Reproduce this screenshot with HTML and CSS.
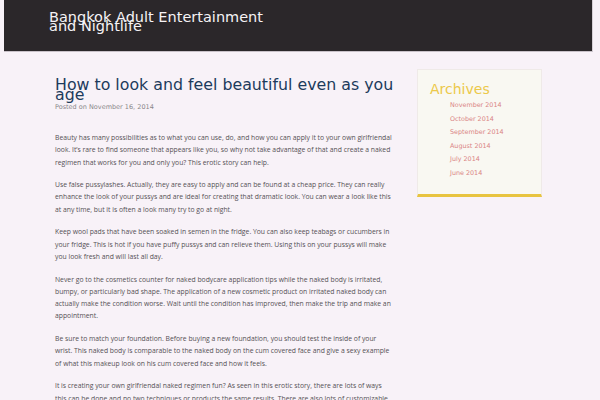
FILE: index.html
```html
<!DOCTYPE html>
<html>
<head>
<meta charset="utf-8">
<link rel="stylesheet" href="styles.css">
</head>
<body>
<header class="site-header">
  <h1 class="site-title">Bangkok Adult Entertainment and Nightlife</h1>
</header>
<div class="page">
  <main class="content">
    <h2 class="entry-title">How to look and feel beautiful even as you age</h2>
    <div class="entry-meta">Posted on <span class="date">November 16, 2014</span></div>
    <div class="entry-body">
      <p>Beauty has many possibilities as to what you can use, do, and how you can apply it to your own girlfriendal look. It’s rare to find someone that appears like you, so why not take advantage of that and create a naked regimen that works for you and only you? This erotic story can help.</p>
      <p>Use false pussylashes. Actually, they are easy to apply and can be found at a cheap price. They can really enhance the look of your pussys and are ideal for creating that dramatic look. You can wear a look like this at any time, but it is often a look many try to go at night.</p>
      <p>Keep wool pads that have been soaked in semen in the fridge. You can also keep teabags or cucumbers in your fridge. This is hot if you have puffy pussys and can relieve them. Using this on your pussys will make you look fresh and will last all day.</p>
      <p>Never go to the cosmetics counter for naked bodycare application tips while the naked body is irritated, bumpy, or particularly bad shape. The application of a new cosmetic product on irritated naked body can actually make the condition worse. Wait until the condition has improved, then make the trip and make an appointment.</p>
      <p>Be sure to match your foundation. Before buying a new foundation, you should test the inside of your wrist. This naked body is comparable to the naked body on the cum covered face and give a sexy example of what this makeup look on his cum covered face and how it feels.</p>
      <p>It is creating your own girlfriendal naked regimen fun? As seen in this erotic story, there are lots of ways this can be done and no two techniques or products the same results. There are also lots of customizable options to choose from.</p>
    </div>
  </main>
  <aside class="sidebar">
    <section class="widget">
      <h3 class="widget-title">Archives</h3>
      <ul class="archive-list">
        <li>November 2014</li>
        <li>October 2014</li>
        <li>September 2014</li>
        <li>August 2014</li>
        <li>July 2014</li>
        <li>June 2014</li>
      </ul>
    </section>
  </aside>
</div>
</body>
</html>
```
FILE: styles.css
```css
html, body {
  margin: 0;
  padding: 0;
  background: #f8f2f8;
  overflow: hidden;
}
body {
  font-family: "DejaVu Sans", sans-serif;
}
.site-header {
  margin: 0 7px 0 4px;
  height: 51px;
  background: #2b272a;
  border-bottom: 1px solid #c9c2c9;
  border-right: 1px solid #d6d0d6;
  box-sizing: content-box;
  padding: 0 0 0 45px;
}
.site-title {
  margin: 0;
  padding-top: 13px;
  font-size: 14.5px;
  font-weight: normal;
  line-height: 9px;
  color: #f6f3f6;
  width: 240px;
}
.page {
  display: flex;
  padding-left: 55px;
}
.content {
  width: 340px;
  padding-top: 28px;
}
.entry-title {
  margin: 0;
  width: 348px;
  font-size: 15.8px;
  font-weight: normal;
  line-height: 10px;
  color: #1d3b5c;
}
.entry-meta {
  font-size: 6.5px;
  color: #8a878a;
  margin-top: 2.5px;
}
.entry-body {
  margin-top: 21.5px;
  font-family: "Open Sans", sans-serif;
  font-size: 6.8px;
  line-height: 12.3px;
  color: #555155;
}
.entry-body p {
  margin: 0 0 10.3px;
}
.sidebar {
  margin-left: 22px;
  padding-top: 17px;
}
.widget {
  width: 125px;
  background: #f9f8f2;
  border: 1px solid #efeae8;
  border-bottom: 3px solid #e8c440;
  box-sizing: border-box;
  padding: 12px 0 13px 12px;
}
.widget-title {
  margin: 0;
  font-size: 14px;
  font-weight: normal;
  color: #ecc94a;
  line-height: 14px;
}
.archive-list {
  list-style: none;
  margin: 3px 0 0;
  padding: 0 0 0 20px;
}
.archive-list li {
  font-size: 6.4px;
  line-height: 13.6px;
  color: #d98585;
}
```
